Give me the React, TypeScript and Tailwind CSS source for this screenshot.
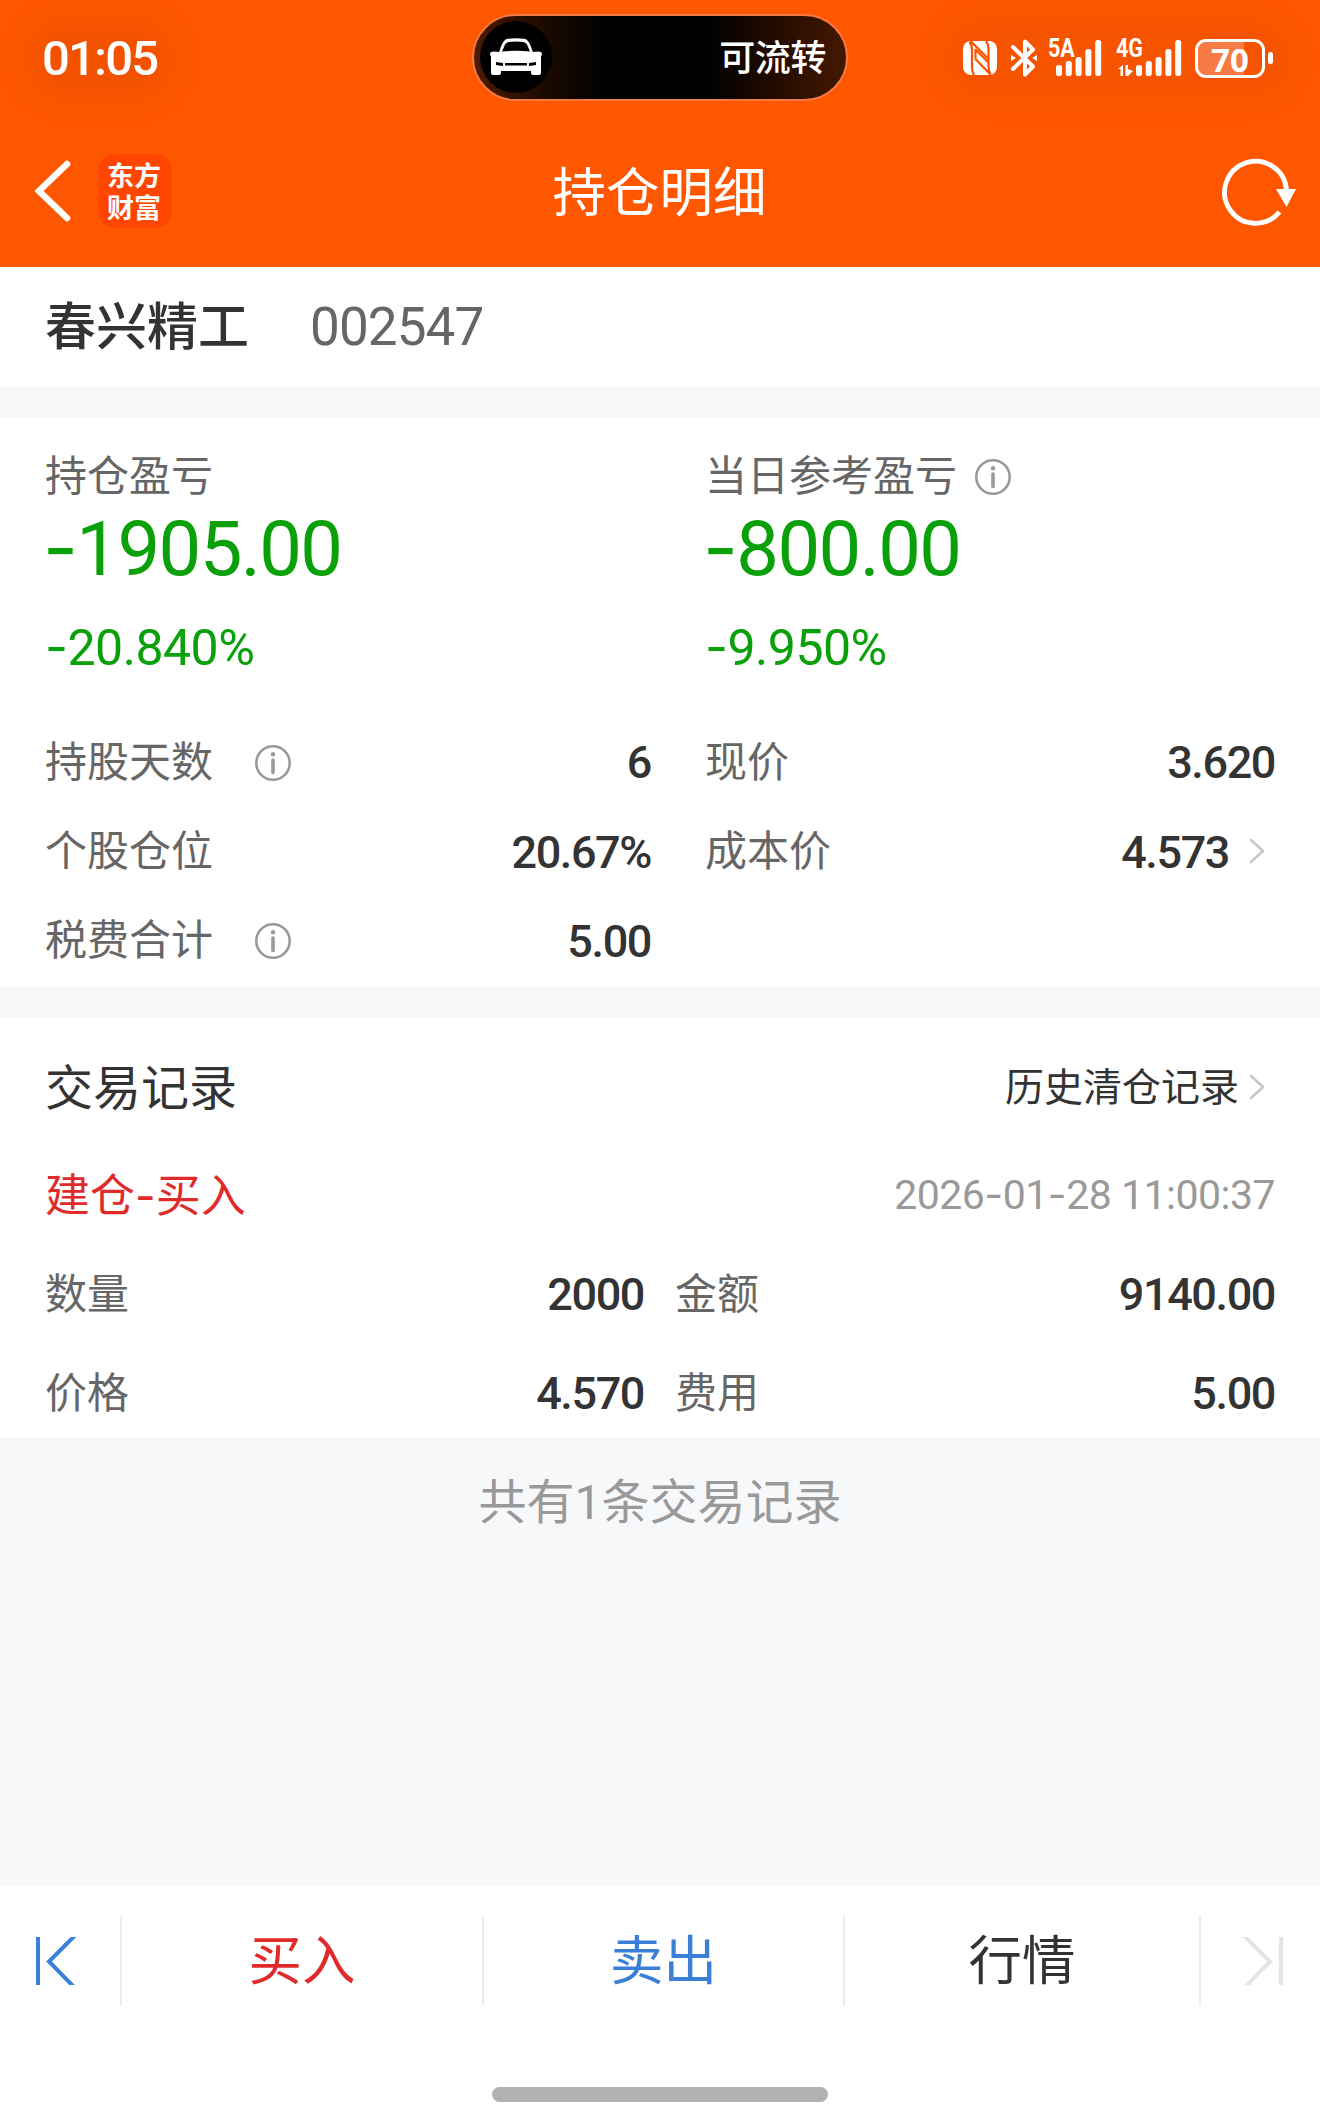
import type { ReactNode } from 'react';

function Num({ children }: { children: string }) {
  // hyphens come from Inter, whose dash is wide enough for the figures
  return (
    <span className="whitespace-pre">
      {children.split(/(-)/).map((part, i) =>
        part === '-' ? <span key={i} className="font-['Inter'] leading-none">-</span> : part
      )}
    </span>
  );
}

function InfoIcon({ className }: { className?: string }) {
  return (
    <svg className={className} width="38" height="38" viewBox="0 0 38 38" fill="none">
      <circle cx="19" cy="19" r="16.7" stroke="#999" strokeWidth="2.6" />
      <circle cx="19" cy="10.2" r="2.2" fill="#999" />
      <path d="M19 16v12.5" stroke="#999" strokeWidth="3.6" strokeLinecap="round" />
    </svg>
  );
}

function Chevron({ className }: { className?: string }) {
  return (
    <svg className={className} width="18" height="28" viewBox="0 0 18 28" fill="none">
      <path d="M3 3l12 11L3 25" stroke="#c8c8c8" strokeWidth="2.6" strokeLinecap="round" strokeLinejoin="round" />
    </svg>
  );
}

function Bars({ className }: { className?: string }) {
  return (
    <svg className={className} width="46" height="38" viewBox="0 0 46 38" fill="#fff">
      <rect x="0" y="26" width="6" height="11" rx="2.5" />
      <rect x="9.8" y="22" width="6" height="15" rx="2.5" />
      <rect x="19.6" y="18" width="6" height="19" rx="2.5" />
      <rect x="29.4" y="10" width="6" height="27" rx="2.5" />
      <rect x="39.2" y="1" width="6" height="36" rx="2.5" />
    </svg>
  );
}

function NetLabel({ children }: { children: string }) {
  return (
    <span className="absolute left-0 top-0 origin-left scale-x-[0.86] font-['Roboto'] text-[25px] font-bold leading-[20px]">
      {children}
    </span>
  );
}

function CarIcon() {
  return (
    <svg width="52" height="38" viewBox="0 0 52 38">
      <path
        fill="#fff"
        fillRule="evenodd"
        d="M10 12C11.5 6 14 1 18 .7C23 0 29 0 34 .7C38 1 40.5 6 42 12L43 14C48 13 52 13 52 16C52 18 51 17 51 19L51 35Q51 37 49 37H43Q41 37 41 35V33H11V35Q11 37 9 37H3Q1 37 1 35L1 19C1 17 0 18 0 16C0 13 4 13 9 14zM12 13.5Q26 12 40 13.5L37 6.5Q36 4.5 33.5 4Q26 3 18.5 4Q16 4.5 15 6.5zM6 24V27L13 28V25zM46 24V27L39 28V25zM15 25V27.5H37V25z"
      />
    </svg>
  );
}

function StatusBar() {
  return (
    <div className="flex h-[114px] items-center">
      <div className="w-[472px] pl-[42px]">
        <span className="inline-block translate-y-[1px] rounded-full bg-black/5 font-['Roboto'] text-[49px] font-medium leading-none tracking-[-1.8px] shadow-[0_0_36px_20px_rgba(0,0,0,0.05)]">01:05</span>
      </div>
      <div className="flex h-[87px] w-[376px] items-center justify-between rounded-full border-2 border-[#f37a45] bg-[linear-gradient(90deg,#4d1b02_0%,#1a0a00_20%,#000_36%,#000_62%,#451800_100%)] pl-[6px] pr-[20px]">
        <div className="flex size-[72px] items-center justify-center rounded-full bg-black">
          <CarIcon />
        </div>
        <span className="-translate-y-[2px] text-[36px] font-medium leading-none tracking-[-0.4px]">可流转</span>
      </div>
      <div className="ml-[115px] flex items-center rounded-full bg-black/[0.03] shadow-[0_0_36px_20px_rgba(0,0,0,0.05)]">
        <svg className="translate-y-[1px]" width="34" height="34" viewBox="0 0 34 34">
          <rect width="34" height="34" rx="8" fill="#fff" />
          <g fill="none" stroke="#fa5200" strokeWidth="2.2">
            <path d="M6.500 1q2.500 3 2.500 8v17q0 5 2 8" />
            <path d="M23 0q2.500 3 2.500 8v17q0 5 2 9" />
            <path d="M7.500 0L25 17.500M12.500 8.500L25 21M12.500 8v9M12 17.500L27 33" />
          </g>
        </svg>
        <svg className="ml-[13px] translate-y-[1px]" width="28" height="38" viewBox="0 0 28 38" fill="none" stroke="#fff" strokeWidth="4" strokeLinejoin="round" strokeLinecap="round">
          <path d="M3 8l20 19.500-8 8V22M3 30L23 10.500 15 2.500v14" />
          <path d="M1 16l5 3-5 3zM27 16l-5 3 5 3z" fill="#fff" stroke="none" />
        </svg>
        <div className="relative ml-[10px] h-[38px] w-[54px] translate-y-[1px]">
          <NetLabel>5A</NetLabel>
          <Bars className="absolute left-[8px] top-0" />
        </div>
        <div className="relative ml-[14px] h-[38px] w-[66px] translate-y-[1px]">
          <NetLabel>4G</NetLabel>
          <svg className="absolute bottom-0 left-[2px]" width="16" height="12" viewBox="0 0 16 12" fill="#fff">
            <path d="M0 4L5 0V11H2.500V4zM7.500 0H10V4L15 6 10 11H7.500z" />
          </svg>
          <Bars className="absolute left-[20px] top-0" />
        </div>
        <div className="ml-[13px] flex h-[39px] w-[70px] translate-y-[1px] items-center justify-center rounded-[11px] border-[3px] border-white bg-[linear-gradient(90deg,#f67b45_70%,transparent_70%)] bg-origin-border">
          <span className="translate-y-[1px] font-['Noto_Sans'] text-[33px] font-bold leading-none">70</span>
        </div>
        <div className="ml-[3px] h-[12px] w-[5px] translate-y-[1px] rounded-[3px] bg-white" />
      </div>
    </div>
  );
}

function NavBar() {
  return (
    <div className="flex h-[153px] items-center pl-[32px] pr-[23px]">
      <div className="flex w-[200px] items-center">
        <svg width="42" height="64" viewBox="0 0 42 64" fill="none">
          <path d="M35 5L7 32l28 27" stroke="#fff" strokeWidth="6.5" strokeLinecap="round" />
        </svg>
        <div className="ml-[24px] flex size-[74px] items-center justify-center rounded-[16px] bg-[#ff4600]">
          <span className="w-[56px] text-[27px] font-bold leading-[32px]">东方<br />财富</span>
        </div>
      </div>
      <h1 className="flex-1 -translate-y-[2px] text-center text-[53.5px] leading-none">持仓明细</h1>
      <div className="flex w-[210px] justify-end">
        <svg className="translate-y-[1px]" width="76" height="70" viewBox="0 0 76 70" fill="none">
          <path d="M65.5 33A31 31 0 1 0 58.5 55" stroke="#fff" strokeWidth="4.8" />
          <path d="M55 32h20L65.5 50z" fill="#fff" />
        </svg>
      </div>
    </div>
  );
}

function Summary({ label, amount, percent, info }: { label: string; amount: string; percent: string; info?: boolean }) {
  return (
    <div className="font-['Roboto'] text-[#09a009]">
      <div className="flex h-[56px] items-center font-['Noto_Sans_CJK_SC'] text-[42px] leading-none text-[#666]">
        <span className="translate-y-[1px]">{label}</span>
        {info && <InfoIcon className="ml-[17px] translate-y-[5px]" />}
      </div>
      <div className="-ml-[2px] flex h-[84px] translate-y-[6px] items-center text-[76px] leading-none tracking-[-1.6px]"><Num>{amount}</Num></div>
      <div className="flex h-[119px] translate-y-[4px] items-center text-[50px] leading-none tracking-[-0.5px]"><Num>{percent}</Num></div>
    </div>
  );
}

function Field({ label, value, info, more, className }: {
  label: string; value: string; info?: boolean; more?: boolean; className?: string;
}) {
  return (
    <div className={`flex items-center leading-none ${className}`}>
      <span className="text-[42px] text-[#666]">{label}</span>
      {info && <InfoIcon className="ml-[41px] translate-y-[4px]" />}
      <span className="ml-auto translate-y-[4px] font-['Roboto'] text-[45px] font-medium tracking-[-1.4px] text-[#333]">{value}</span>
      {more && <Chevron className="ml-[19px] mr-[9px] translate-y-[3px]" />}
    </div>
  );
}

function Tab({ className, children }: { className: string; children: ReactNode }) {
  return (
    <div className={`flex h-[90px] items-center justify-center border-r-2 border-[#ededed] text-[53.5px] leading-none ${className}`}>
      <span className="-translate-y-[4px]">{children}</span>
    </div>
  );
}

export default function App() {
  return (
    <div className="flex h-[2120px] w-[1320px] flex-col overflow-hidden bg-[#f7f8fa] font-['Noto_Sans_CJK_SC',sans-serif]">
      <header className="h-[267px] bg-[#ff5700] text-white">
        <StatusBar />
        <NavBar />
      </header>

      <div className="flex h-[120px] items-center bg-white px-[45px] leading-none">
        <span className="-translate-y-[4px] text-[51px] font-medium text-[#333]">春兴精工</span>
        <span className="ml-[61px] font-['Roboto'] text-[53px] tracking-[-0.9px] text-[#666]">002547</span>
      </div>

      <section className="mt-[30px] h-[570px] bg-white px-[45px] pt-[27px]">
        <div className="grid grid-cols-[660px_1fr]">
          <Summary label="持仓盈亏" amount="-1905.00" percent="-20.840%" />
          <Summary label="当日参考盈亏" amount="-800.00" percent="-9.950%" info />
        </div>
        <div className="mt-[11px] grid grid-cols-[606px_1fr] gap-x-[54px]">
          <Field className="h-[89px]" label="持股天数" value="6" info />
          <Field className="h-[89px]" label="现价" value="3.620" />
          <Field className="h-[90px]" label="个股仓位" value="20.67%" />
          <Field className="h-[90px]" label="成本价" value="4.573" more />
          <Field className="h-[88px]" label="税费合计" value="5.00" info />
        </div>
      </section>

      <section className="mt-[30px] h-[420px] bg-white px-[45px]">
        <div className="flex h-[134px] items-center justify-between leading-none text-[#333]">
          <h2 className="text-[48px]">交易记录</h2>
          <div className="flex items-center pr-[9px] text-[39px]">
            历史清仓记录
            <Chevron className="ml-[9px] translate-y-[3px]" />
          </div>
        </div>
        <div className="flex h-[80px] items-center justify-between leading-none">
          <span className="translate-y-[3px] text-[45px] text-[#e02b2b]"><Num>建仓-买入</Num></span>
          <span className="translate-y-[4px] font-['Roboto'] text-[41px] tracking-[-0.5px] text-[#999]"><Num>2026-01-28 11:00:37</Num></span>
        </div>
        <div className="mt-[10px] grid grid-cols-[599px_1fr] gap-x-[31px]">
          <Field className="h-[99px]" label="数量" value="2000" />
          <Field className="h-[99px]" label="金额" value="9140.00" />
          <Field className="h-[99px]" label="价格" value="4.570" />
          <Field className="h-[99px]" label="费用" value="5.00" />
        </div>
      </section>

      <p className="h-[122px] pt-[37px] text-center text-[48px] leading-[48px] text-[#999]">
        共有<span className="font-['Roboto'] leading-none">1</span>条交易记录
      </p>

      <footer className="mt-auto flex h-[234px] flex-col bg-white pt-[30px]">
        <div className="flex">
          <div className="flex h-[90px] w-[122px] items-center border-r-2 border-[#ededed] pl-[35px]">
            <svg width="42" height="48" viewBox="0 0 42 48" fill="none" stroke="#3a80d9" strokeWidth="4">
              <path d="M3 0v48M40 -1.5L14 24.500 39 50" />
            </svg>
          </div>
          <Tab className="w-[362px] text-[#e02b2b]">买入</Tab>
          <Tab className="w-[361px] text-[#3a80d9]">卖出</Tab>
          <Tab className="w-[356px] text-[#333]">行情</Tab>
          <div className="flex h-[90px] w-[119px] items-center pl-[41px]">
            <svg width="42" height="48" viewBox="0 0 42 48" fill="none" stroke="#e4e4e4" strokeWidth="4">
              <path d="M39 0v48M2 -1.5L28 24.500 3 50" />
            </svg>
          </div>
        </div>
        <div className="mx-auto mb-[18px] mt-auto h-[15px] w-[336px] rounded-full bg-[#b2b2b2]" />
      </footer>
    </div>
  );
}
